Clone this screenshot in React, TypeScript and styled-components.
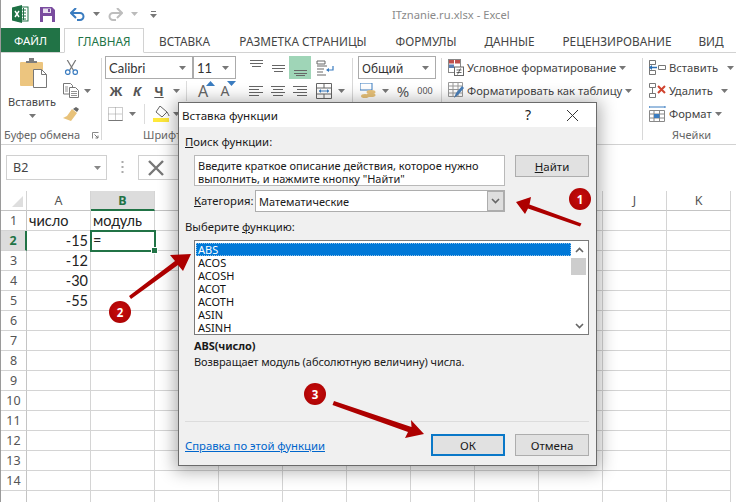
import React from "react";
import styled, { createGlobalStyle } from "styled-components";

const Global = createGlobalStyle`
  html, body { margin: 0; padding: 0; background: #fff; }
  * { box-sizing: border-box; }
`;
const UI = `"Noto Sans", "Open Sans", sans-serif`;
const Page = styled.div`
  position: relative; width: 736px; height: 502px; overflow: hidden; background: #fff;
  font-family: ${UI}; font-size: 11px; color: #444; border-left: 1px solid #9a9a9a;
`;
const TitleBar = styled.div`display: flex; align-items: center; height: 28px; padding-left: 10px;`;
const Qat = styled.div<{ $w: number }>`display: flex; justify-content: center; align-items: center; width: ${p => p.$w}px; flex: none;`;
const DocTitle = styled.div`margin-left: 227px; font-size: 11.2px; color: #8a8a8a; white-space: nowrap;`;
const Tabs = styled.div`display: flex; align-items: stretch; height: 25px; border-bottom: 1px solid #d2d2d2; font-size: 11.8px; color: #444;`;
const FileTab = styled.div`width: 59px; flex: none; height: 24px; background: #217346; color: #fff; display: flex; align-items: center; justify-content: center; font-size: 11.5px; margin-right: 4px;`;
const Tab = styled.div<{ $active?: boolean; $w: number }>`
  width: ${p => p.$w}px; flex: none; display: flex; align-items: center; justify-content: center; white-space: nowrap; height: 25px;
  ${p => p.$active ? "border: 1px solid #d2d2d2; border-bottom: 1px solid #fff; color: #217346; background:#fff;" : ""}
`;
const Ribbon = styled.div`display: flex; height: 92px; border-bottom: 1px solid #d2d2d2;`;
const Group = styled.div<{ $w: number }>`width: ${p => p.$w}px; flex: none; display: flex; flex-direction: column; position: relative; padding-top: 3px;`;
const GroupBody = styled.div`flex: 1; display: flex; min-height: 0;`;
const GroupLabel = styled.div<{ $pl: number }>`height: 16px; padding-left: ${p => p.$pl}px; font-size: 11px; line-height: 16px; color: #666; white-space: nowrap; display: flex; align-items: center; gap: 12px; position: relative; top: -1px;`;
const GroupSep = styled.div`width: 1px; flex: none; background: #d8d8d8; margin: 5px 0 4px;`;
const PasteBtn = styled.div`width: 62px; flex: none; display: flex; flex-direction: column; align-items: center; padding-top: 2px; color: #444;`;
const PasteArt = styled.svg`margin-left: 4px; flex: none;`;
const PasteLabel = styled.div`margin-top: 6px; font-size: 11px; line-height: 16px;`;
const PasteCaret = styled.div`margin-top: 4px; line-height: 0;`;
const Col = styled.div<{ $w?: number; $ml?: number }>`display: flex; flex-direction: column; ${p => p.$w ? `width:${p.$w}px;` : ""} margin-left: ${p => p.$ml ?? 0}px; flex: none;`;
const RibbonRow = styled.div<{ $ml?: number }>`display: flex; align-items: center; height: 23px; flex: none; padding-left: ${p => p.$ml ?? 0}px;`;
const Cell = styled.div<{ $w: number; $on?: boolean }>`
  width: ${p => p.$w}px; height: 23px; flex: none; display: flex; align-items: center; justify-content: center;
  ${p => p.$on ? "background:#9fd5b7;" : ""}
`;
const Glyph = styled.span<{ $b?: boolean; $i?: boolean; $u?: boolean; $s?: number }>`
  font-weight: ${p => p.$b ? 700 : 400}; font-style: ${p => p.$i ? "italic" : "normal"};
  text-decoration: ${p => p.$u ? "underline" : "none"}; font-size: ${p => p.$s ?? 13}px; color: #555;
`;
const RowSep = styled.div<{ $ml: number; $mr: number }>`width: 1px; height: 20px; background: #dcdcdc; margin: 0 ${p => p.$mr}px 0 ${p => p.$ml}px; flex: none;`;
const Combo = styled.div<{ $w: number; $lato?: boolean }>`
  width: ${p => p.$w}px; height: 23px; flex: none; border: 1px solid #ababab; background: #fff; display: flex; align-items: center; justify-content: space-between;
  padding: 0 6px 0 3px; color: #333;
  ${p => p.$lato ? "font-family: Lato, sans-serif; font-size: 13px;" : "font-size: 11.8px;"}
`;
const StyleItem = styled.div<{ $w: number }>`
  width: ${p => p.$w}px; height: 23px; display: flex; align-items: center; gap: 3px; font-size: 11.25px; color: #444; white-space: nowrap; padding-left: 6px;
  svg { flex: none; }
`;
const FormulaBar = styled.div`display: flex; align-items: center; height: 25px; margin-top: 10px; padding-left: 5px;`;
const NameBox = styled.div`width: 101px; height: 25px; border: 1px solid #d0d0d0; display: flex; align-items: center; justify-content: space-between; padding: 0 5px 0 6px; font-size: 12.5px; color: #444;`;
const Dots = styled.div`width: 31px; display: flex; justify-content: center; line-height: 0;`;
const FxBtn = styled.div`width: 60px; height: 25px; border: 1px solid #d0d0d0; padding-left: 9px; display: flex; align-items: center;`;
const Sheet = styled.div`margin-top: 11px; font-family: Lato, "Liberation Sans", sans-serif; font-size: 14.5px; color: #222;`;
const SheetRow = styled.div<{ $h: number }>`display: flex; height: ${p => p.$h}px;`;
const Corner = styled.div`width: 26px; flex: none; border-right: 1px solid #d4d4d4; border-bottom: 1px solid #c4c4c4; display: flex; justify-content: flex-end; align-items: flex-end; padding: 0 3px 3px 0;`;
const ColHead = styled.div<{ $on?: boolean }>`
  width: 64px; flex: none; display: flex; align-items: center; justify-content: center; font-family: ${UI}; font-size: 12.5px; border-right: 1px solid #d4d4d4;
  ${p => p.$on ? "background:#dcdcdc;color:#217346;font-weight:700;border-bottom:2px solid #217346;" : "color:#555;border-bottom:1px solid #c4c4c4;"}
`;
const RowHead = styled.div<{ $on?: boolean }>`
  width: 26px; flex: none; display: flex; align-items: center; justify-content: center; font-family: ${UI}; font-size: 12.5px; border-bottom: 1px solid #d4d4d4;
  ${p => p.$on ? "background:#dcdcdc;color:#217346;font-weight:700;border-right:2px solid #217346;" : "color:#555;border-right:1px solid #c4c4c4;"}
`;
const Td = styled.div<{ $r?: boolean; $sel?: boolean }>`
  width: 64px; flex: none; border-right: 1px solid #d4d4d4; border-bottom: 1px solid #d4d4d4; display: flex; align-items: center; padding: 0 2px;
  justify-content: ${p => p.$r ? "flex-end" : "flex-start"}; position: relative; white-space: nowrap;
  ${p => p.$sel ? "outline: 2px solid #217346; outline-offset: -1px; z-index: 1;" : ""}
`;
const Handle = styled.span`position: absolute; right: -4px; bottom: -4px; width: 5px; height: 5px; background: #217346; border: 1px solid #fff; box-sizing: content-box;`;

const Dialog = styled.div`
  position: absolute; left: 177px; top: 102px; width: 419px; height: 364px; background: #f0f0f0; border: 1px solid #6b6b6b;
  box-shadow: 0 2px 16px 3px rgba(0,0,0,.32); color: #1a1a1a; font-size: 11.3px; display: flex; flex-direction: column;
`;
const DlgTitle = styled.div`height: 24px; flex: none; background: #fff; display: flex; align-items: center; justify-content: space-between; padding: 0 18px 0 3px; font-size: 11.6px;`;
const DlgTools = styled.div`display: flex; align-items: center; gap: 36px; line-height: 0;`;
const Help = styled.span`font-size: 14px; line-height: 16px; color: #222;`;
const DlgBody = styled.div`flex: 1; padding: 7px 7px 0 6px; display: flex; flex-direction: column;`;
const Label = styled.div<{ $mt?: number; $ml?: number; $w?: number }>`line-height: 16px; height: 16px; margin-top: ${p => p.$mt ?? 0}px; margin-left: ${p => p.$ml ?? 0}px; white-space: nowrap; ${p => p.$w ? `width:${p.$w}px;flex:none;` : ""}`;
const Row = styled.div<{ $mt: number; $ml?: number }>`display: flex; align-items: flex-start; margin-top: ${p => p.$mt}px; margin-left: ${p => p.$ml ?? 9}px;`;
const DescBox = styled.div`width: 311px; height: 31px; background: #fff; border: 1px solid #b9b9b9; padding: 3px 3px; line-height: 13px; font-size: 11px; margin-right: 10px; white-space: nowrap;`;
const Btn = styled.div<{ $def?: boolean }>`
  width: 74px; height: 22px; display: flex; align-items: center; justify-content: center; background: #e1e1e1; font-size: 11.5px;
  border: ${p => p.$def ? "2px solid #0a78c8" : "1px solid #adadad"};
`;
const CatRow = styled.div`display: flex; align-items: center; height: 22px; margin-top: 4px; margin-left: 9px;`;
const Select = styled.div`width: 250px; height: 22px; background: #fff; border: 1px solid #adadad; display: flex; align-items: center; justify-content: space-between; padding-left: 3px; font-size: 11px;`;
const SelectBtn = styled.div`width: 17px; height: 20px; background: #dedede; border: 1px solid #adadad; display: flex; align-items: center; justify-content: center;`;
const List = styled.div`width: 395px; height: 95px; margin-top: 5px; margin-left: 9px; background: #fff; border: 1px solid #7a7a7a; display: flex; padding: 1px 0 0 1px;`;
const Items = styled.div`flex: 1; min-width: 0; padding-top: 1px;`;
const Item = styled.div<{ $sel?: boolean }>`
  height: 13px; line-height: 13px; padding-left: 2px; font-size: 11px;
  ${p => p.$sel ? "background:#0078d7;color:#fff;outline:1px dotted #8fc0e8;outline-offset:-1px;" : "color:#111;"}
`;
const Scroll = styled.div`width: 17px; flex: none; display: flex; flex-direction: column; align-items: stretch; margin-top: -1px;`;
const ScrollBtn = styled.div`height: 17px; display: flex; align-items: center; justify-content: center; flex: none;`;
const Thumb = styled.div`height: 17px; background: #cdcdcd; margin-right: 2px;`;
const ScrollFill = styled.div`flex: 1;`;
const Sig = styled.div`margin-top: 3px; margin-left: 9px; height: 16px; line-height: 16px; font-weight: 700; font-size: 11px; letter-spacing: -.1px;`;
const Desc = styled.div`margin-left: 9px; height: 16px; line-height: 16px; font-size: 11px; letter-spacing: -.07px; white-space: nowrap;`;
const Rule = styled.div`height: 1px; background: #dcdcdc; margin-top: 51px; flex: none;`;
const Footer = styled.div`display: flex; align-items: center; justify-content: space-between; margin-top: 12px; height: 22px;`;
const Link = styled.a`color: #0066cc; text-decoration: underline; font-size: 11.3px;`;
const Btns = styled.div`display: flex; gap: 10px;`;
const Overlay = styled.svg`position: absolute; left: -1px; top: 0; width: 736px; height: 502px; pointer-events: none;`;
const Badge = styled.div<{ $x: number; $y: number }>`
  position: absolute; left: ${p => p.$x - 12}px; top: ${p => p.$y - 11}px; width: 22px; height: 22px; border-radius: 50%;
  background: radial-gradient(circle at 50% 45%, #c80d0d, #a50000); color: #fff; font-weight: 700; font-size: 11.5px; display: flex; align-items: center; justify-content: center;
`;

const Caret = ({ c = "#777" }: { c?: string }) => <svg width="7" height="4" viewBox="0 0 7 4"><path d="M0 0h7L3.5 4z" fill={c} /></svg>;
const Chevron = ({ up, c = "#666" }: { up?: boolean; c?: string }) => (
  <svg width="9" height="6" viewBox="0 0 9 6"><path d={up ? "M1 5l3.5-3.5L8 5" : "M1 1l3.5 3.5L8 1"} fill="none" stroke={c} strokeWidth="1.6" /></svg>
);
const Lines = ({ rows }: { rows: [number, number, number][] }) => (
  <svg width="18" height="18" viewBox="0 0 18 18">{rows.map(([y, a, b], i) => <path key={i} d={`M${a} ${y}.5H${b}`} stroke="#666" />)}</svg>
);
const ExcelLogo = () => (
  <svg width="17" height="18" viewBox="0 0 17 18">
    <rect x="6" y="2" width="10" height="14" fill="#fff" stroke="#217346" />
    <path d="M9 5h5M9 8h5M9 11h5M9 14h5M11.5 3v12" stroke="#217346" />
    <path d="M0 2.5L10 0v18L0 15.5z" fill="#1e7145" />
    <path d="M3 6l4 6M7 6l-4 6" stroke="#fff" strokeWidth="1.4" />
  </svg>
);
const SaveIcon = () => (
  <svg width="15" height="15" viewBox="0 0 15 15">
    <path d="M0 0h12l3 3v12H0z" fill="#7a4c9f" />
    <rect x="3" y="1.5" width="8" height="4.5" fill="#e8e0ef" />
    <rect x="3" y="9" width="9" height="6" fill="#fff" />
    <rect x="8" y="2" width="2" height="3" fill="#7a4c9f" />
  </svg>
);
const UndoIcon = ({ c, flip }: { c: string; flip?: boolean }) => (
  <svg width="15" height="13" viewBox="0 0 15 13" style={flip ? { transform: "scaleX(-1)" } : undefined}>
    <path d="M2 5h8a3.5 3.5 0 0 1 0 7H7" fill="none" stroke={c} strokeWidth="2" />
    <path d="M6 0L1 5l5 5" fill="none" stroke={c} strokeWidth="2" />
  </svg>
);
const QatMore = () => <svg width="7" height="7" viewBox="0 0 7 7"><path d="M1 .5h5" stroke="#777" /><path d="M0 3h7L3.5 7z" fill="#777" /></svg>;
const PasteIcon = () => (
  <PasteArt width="30" height="30" viewBox="0 0 30 30">
    <rect x="1" y="4" width="23" height="24" rx="1" fill="#ecc57f" />
    <path d="M7 5V3h3V0h5v3h3v2z" fill="#7d7d7d" />
    <path d="M14.5 11.5h8l5 5v13h-13z" fill="#fff" stroke="#777" />
    <path d="M22.5 11.5v5h5" fill="none" stroke="#777" />
  </PasteArt>
);
const Scissors = () => (
  <svg width="15" height="15" viewBox="0 0 15 16">
    <path d="M3 0l6.5 11M12 0L5.5 11" stroke="#777" strokeWidth="1.3" />
    <circle cx="3.5" cy="13" r="2.4" fill="none" stroke="#3a7cc0" strokeWidth="1.3" />
    <circle cx="11.5" cy="13" r="2.4" fill="none" stroke="#3a7cc0" strokeWidth="1.3" />
  </svg>
);
const CopyIcon = () => (
  <svg width="16" height="15" viewBox="0 0 16 15" fill="#fff" stroke="#777">
    <path d="M.5 .5h7l2 2V11H.5z" /><path d="M6.5 4.5h6l3 3v7h-9z" />
    <path d="M8 8.5h6M8 10.5h6M8 12.5h6M2 4h3M2 6h3M2 8h3" strokeWidth=".8" />
  </svg>
);
const BrushIcon = () => (
  <svg width="16" height="14" viewBox="0 0 16 14">
    <path d="M10 2l3-2 3 2-2 3z" fill="#666" />
    <path d="M9 2l5 4-6 8-8-3 4-2z" fill="#e8c27a" />
  </svg>
);
const BigA = ({ up }: { up?: boolean }) => (
  <svg width="9" height="5" viewBox="0 0 9 5"><path d={up ? "M0 5l4.5-5L9 5z" : "M0 0l4.5 5L9 0z"} fill="#3a7cc0" /></svg>
);
const GrowA = styled.span<{ $s: number }>`position: relative; font-size: ${p => p.$s}px; color: #666; line-height: 1;`;
const Sup = styled.span`position: absolute; top: -3px; right: -7px; line-height: 0;`;
const BordersIcon = () => (
  <svg width="15" height="14" viewBox="0 0 15 14"><path d="M.5.5h14v13H.5zM7.5.5v13M.5 7h14" fill="none" stroke="#999" strokeDasharray="1 1" /><path d="M.5 13.5h14" stroke="#777" /></svg>
);
const FillIcon = () => (
  <svg width="17" height="16" viewBox="0 0 17 16">
    <path d="M7 0l7 6-5 5-6-5z" fill="#fff" stroke="#666" /><path d="M14 6c1 2 2 3 2 4" stroke="#666" />
    <rect x="0" y="12" width="16" height="4" fill="#ffe93b" />
  </svg>
);
const WrapIcon = () => (
  <svg width="18" height="16" viewBox="0 0 18 16">
    <path d="M1 1h8v3H1zM1 6h10M1 9h7M1 12h6M1 15h9" fill="none" stroke="#666" />
    <path d="M17 6v4h-6" fill="none" stroke="#3a7cc0" strokeWidth="1.2" /><path d="M13 8l-3 2 3 2z" fill="#3a7cc0" />
  </svg>
);
const MergeIcon = () => (
  <svg width="18" height="16" viewBox="0 0 18 16">
    <path d="M.5.5h15v15H.5zM.5 5h15M.5 11h15M8 .5V5M8 11v4.5" fill="none" stroke="#666" />
    <path d="M3 8h10" stroke="#3a7cc0" /><path d="M3 8l2-2v4zM13 8l-2-2v4z" fill="#3a7cc0" />
  </svg>
);
const CurrencyIcon = () => (
  <svg width="16" height="16" viewBox="0 0 16 16">
    <rect x="0" y="0" width="12" height="7" fill="#fff" stroke="#3a7cc0" /><ellipse cx="11" cy="9" rx="4.5" ry="2" fill="#e8c27a" /><ellipse cx="11" cy="12" rx="4.5" ry="2" fill="#e8c27a" /><ellipse cx="5" cy="13" rx="4" ry="2" fill="#e8c27a" />
  </svg>
);
const CondIcon = () => (
  <svg width="16" height="17" viewBox="0 0 16 17">
    <rect x=".5" y=".5" width="12" height="13" fill="#fff" stroke="#888" /><rect x="1" y="1" width="5" height="3.5" fill="#c0504d" /><rect x="7" y="1" width="5" height="3.5" fill="#c0504d" /><rect x="1" y="5.5" width="5" height="3.5" fill="#5b7fb5" />
    <rect x="6.5" y="8" width="9" height="8.5" fill="#fff" stroke="#666" /><path d="M8.5 11h5M8.5 13.5h5M12.5 9.5l-3 6" stroke="#444" strokeWidth=".8" />
  </svg>
);
const TableIcon = () => (
  <svg width="16" height="17" viewBox="0 0 16 17">
    <path d="M.5.5h14v14H.5zM.5 4h14M.5 7.5h14M.5 11h14M5 .5v14M10 .5v14" fill="none" stroke="#999" />
    <path d="M6 16l2-5 6-7 2 2-6 7z" fill="#4a7fb8" />
  </svg>
);
const InsIcon = () => (
  <svg width="17" height="15" viewBox="0 0 17 15" fill="none" stroke="#777">
    <path d="M.5.5h6v4h-6zM.5 10.5h6v4h-6zM.5.5v14M9.5 5.5h7v4h-7z" />
    <path d="M1 7.5h7" stroke="#2a6fb5" strokeWidth="1.5" /><path d="M3 5L0 7.5 3 10z" fill="#2a6fb5" stroke="none" />
  </svg>
);
const DelIcon = () => (
  <svg width="17" height="15" viewBox="0 0 17 15" fill="none" stroke="#777">
    <path d="M.5.5h6v4h-6zM.5 10.5h6v4h-6zM3.5 4.5v6" />
    <path d="M9 3l7 7M16 3l-7 7" stroke="#d0432f" strokeWidth="2" />
  </svg>
);
const FmtIcon = () => (
  <svg width="17" height="16" viewBox="0 0 17 16">
    <path d="M0 1h16M0 0v2M16 0v2" stroke="#3a7cc0" />
    <path d="M.5 4.5h15v11H.5zM.5 8h15M.5 12h15M5 4.5v11M10.5 4.5v11" fill="none" stroke="#888" />
    <rect x="5" y="8" width="5.5" height="4" fill="#3a7cc0" />
  </svg>
);
const Launcher = () => <svg width="7" height="7" viewBox="0 0 7 7"><path d="M.5 .5h6M.5 .5v6" fill="none" stroke="#888" /><path d="M2.5 2.5L6 6M6 3.5V6H3.5" fill="none" stroke="#777" /></svg>;
const CloseX = ({ s }: { s: number }) => <svg width={s} height={s} viewBox="0 0 10 10"><path d="M0 0l10 10M10 0L0 10" stroke="#333" strokeWidth=".9" fill="none" /></svg>;
const DotsIcon = () => <svg width="3" height="13" viewBox="0 0 3 13"><path d="M1.5 0v2M1.5 5v2M1.5 10v2" stroke="#aaa" strokeWidth="2" /></svg>;
const CancelBig = () => <svg width="16" height="16" viewBox="0 0 16 16"><path d="M1 1l14 14M15 1L1 15" stroke="#777" strokeWidth="2.4" /></svg>;
const Triangle = () => <svg width="11" height="11" viewBox="0 0 11 11"><path d="M11 0v11H0z" fill="#dedede" /></svg>;

const L = {
  top: [[1, 3, 16], [4, 3, 16], [7, 5, 14]] as [number, number, number][],
  mid: [[6, 3, 16], [9, 3, 16], [12, 5, 14]] as [number, number, number][],
  bot: [[11, 3, 16], [14, 3, 16], [16, 5, 14]] as [number, number, number][],
  l: [[4, 2, 16], [7, 2, 12], [10, 2, 16], [13, 2, 12]] as [number, number, number][],
  c: [[4, 2, 16], [7, 4, 14], [10, 2, 16], [13, 4, 14]] as [number, number, number][],
  r: [[4, 2, 16], [7, 6, 16], [10, 2, 16], [13, 6, 16]] as [number, number, number][],
};

const rowsData: Record<number, [string, string]> = { 1: ["число", "модуль"], 2: ["-15", "="], 3: ["-12", ""], 4: ["-30", ""], 5: ["-55", ""] };
const cols = ["A", "B", "C", "D", "E", "F", "G", "H", "I", "J", "K"];
const funcs = ["ABS", "ACOS", "ACOSH", "ACOT", "ACOTH", "ASIN", "ASINH"];
const tabs: [string, number][] = [["ВСТАВКА", 81], ["РАЗМЕТКА СТРАНИЦЫ", 156], ["ФОРМУЛЫ", 90], ["ДАННЫЕ", 77], ["РЕЦЕНЗИРОВАНИЕ", 138], ["ВИД", 50]];

export default function App() {
  return (
    <Page>
      <Global />
      <TitleBar>
        <Qat $w={18}><ExcelLogo /></Qat>
        <Qat $w={36}><SaveIcon /></Qat>
        <Qat $w={24}><UndoIcon c="#3a7cc0" /></Qat>
        <Qat $w={14}><Caret /></Qat>
        <Qat $w={24}><UndoIcon c="#bdbdbd" flip /></Qat>
        <Qat $w={14}><Caret c="#bbb" /></Qat>
        <Qat $w={24}><QatMore /></Qat>
        <DocTitle>ITznanie.ru.xlsx - Excel</DocTitle>
      </TitleBar>
      <Tabs>
        <FileTab>ФАЙЛ</FileTab>
        <Tab $active $w={80}>ГЛАВНАЯ</Tab>
        {tabs.map(([t, w]) => <Tab key={t} $w={w}>{t}</Tab>)}
      </Tabs>
      <Ribbon>
        <Group $w={100}>
          <GroupBody>
            <PasteBtn>
              <PasteIcon />
              <PasteLabel>Вставить</PasteLabel>
              <PasteCaret><Caret /></PasteCaret>
            </PasteBtn>
            <Col>
              <RibbonRow><Cell $w={16}><Scissors /></Cell></RibbonRow>
              <RibbonRow><Cell $w={16}><CopyIcon /></Cell><Cell $w={16}><Caret /></Cell></RibbonRow>
              <RibbonRow><Cell $w={16}><BrushIcon /></Cell></RibbonRow>
            </Col>
          </GroupBody>
          <GroupLabel $pl={3}>Буфер обмена<Launcher /></GroupLabel>
        </Group>
        <GroupSep />
        <Group $w={250}>
          <GroupBody>
            <Col $w={138}>
              <RibbonRow $ml={3}>
                <Combo $w={88} $lato>Calibri<Caret /></Combo>
                <Combo $w={43} $lato>11<Caret /></Combo>
              </RibbonRow>
              <RibbonRow $ml={3}>
                <Cell $w={22}><Glyph $b>Ж</Glyph></Cell>
                <Cell $w={20}><Glyph $b $i>К</Glyph></Cell>
                <Cell $w={24}><Glyph $b $u>Ч</Glyph></Cell>
                <Cell $w={10}><Caret /></Cell>
                <RowSep $ml={5} $mr={5} />
                <Cell $w={22}><GrowA $s={16}>A<Sup><BigA up /></Sup></GrowA></Cell>
                <Cell $w={22}><GrowA $s={14}>A<Sup><BigA /></Sup></GrowA></Cell>
              </RibbonRow>
              <RibbonRow $ml={3}>
                <Cell $w={20}><BordersIcon /></Cell>
                <Cell $w={14}><Caret /></Cell>
                <RowSep $ml={5} $mr={6} />
                <Cell $w={20}><FillIcon /></Cell>
                <Cell $w={10}><Caret /></Cell>
              </RibbonRow>
            </Col>
            <Col $w={112}>
              <RibbonRow $ml={5}>
                <Cell $w={22}><Lines rows={L.top} /></Cell>
                <Cell $w={22}><Lines rows={L.mid} /></Cell>
                <Cell $w={22} $on><Lines rows={L.bot} /></Cell>
                <Cell $w={3} />
                <Cell $w={22}><WrapIcon /></Cell>
              </RibbonRow>
              <RibbonRow $ml={5}>
                <Cell $w={22}><Lines rows={L.l} /></Cell>
                <Cell $w={22}><Lines rows={L.c} /></Cell>
                <Cell $w={22}><Lines rows={L.r} /></Cell>
                <Cell $w={3} />
                <Cell $w={22}><MergeIcon /></Cell>
                <Cell $w={10}><Caret /></Cell>
              </RibbonRow>
            </Col>
          </GroupBody>
          <GroupLabel $pl={41}>Шрифт</GroupLabel>
        </Group>
        <GroupSep />
        <Group $w={88}>
          <GroupBody>
            <Col $ml={5}>
              <RibbonRow><Combo $w={78}>Общий<Caret /></Combo></RibbonRow>
              <RibbonRow>
                <Cell $w={20}><CurrencyIcon /></Cell>
                <Cell $w={14}><Caret /></Cell>
                <Cell $w={22}><Glyph $s={15}>%</Glyph></Cell>
                <Cell $w={22}><Glyph $s={9}>000</Glyph></Cell>
              </RibbonRow>
            </Col>
          </GroupBody>
        </Group>
        <GroupSep />
        <Group $w={200}>
          <GroupBody>
            <Col>
              <StyleItem $w={200}><CondIcon />Условное форматирование<Caret /></StyleItem>
              <StyleItem $w={200}><TableIcon />Форматировать как таблицу<Caret /></StyleItem>
            </Col>
          </GroupBody>
        </Group>
        <GroupSep />
        <Group $w={92}>
          <GroupBody>
            <Col>
              <StyleItem $w={92}><InsIcon />Вставить<Cell $w={18}><Caret /></Cell></StyleItem>
              <StyleItem $w={92}><DelIcon />Удалить<Cell $w={18}><Caret /></Cell></StyleItem>
              <StyleItem $w={92}><FmtIcon />Формат<Caret /></StyleItem>
            </Col>
          </GroupBody>
          <GroupLabel $pl={29}>Ячейки</GroupLabel>
        </Group>
      </Ribbon>
      <FormulaBar>
        <NameBox>B2<Caret c="#888" /></NameBox>
        <Dots><DotsIcon /></Dots>
        <FxBtn><CancelBig /></FxBtn>
      </FormulaBar>
      <Sheet>
        <SheetRow $h={20}>
          <Corner><Triangle /></Corner>
          {cols.map(c => <ColHead key={c} $on={c === "B"}>{c}</ColHead>)}
        </SheetRow>
        {Array.from({ length: 15 }, (_, i) => i + 1).map(n => (
          <SheetRow key={n} $h={20}>
            <RowHead $on={n === 2}>{n < 15 ? n : ""}</RowHead>
            {cols.map((c, j) => {
              const v = rowsData[n];
              const text = v && j < 2 ? v[j] : "";
              return (
                <Td key={c} $r={j === 0 && n > 1} $sel={n === 2 && j === 1}>
                  {text}
                  {n === 2 && j === 1 && <Handle />}
                </Td>
              );
            })}
          </SheetRow>
        ))}
      </Sheet>

      <Dialog>
        <DlgTitle>
          Вставка функции
          <DlgTools><Help>?</Help><CloseX s={11} /></DlgTools>
        </DlgTitle>
        <DlgBody>
          <Label><u>П</u>оиск функции:</Label>
          <Row $mt={5}>
            <DescBox>Введите краткое описание действия, которое нужно<br />выполнить, и нажмите кнопку "Найти"</DescBox>
            <Btn><span><u>Н</u>айти</span></Btn>
          </Row>
          <CatRow>
            <Label $w={61}><u>К</u>атегория:</Label>
            <Select>Математические<SelectBtn><Chevron /></SelectBtn></Select>
          </CatRow>
          <Label $mt={7}>Выберите <u>ф</u>ункцию:</Label>
          <List>
            <Items>{funcs.map((f, i) => <Item key={f} $sel={i === 0}>{f}</Item>)}</Items>
            <Scroll>
              <ScrollBtn><Chevron up /></ScrollBtn>
              <Thumb />
              <ScrollFill />
              <ScrollBtn><Chevron /></ScrollBtn>
            </Scroll>
          </List>
          <Sig>ABS(число)</Sig>
          <Desc>Возвращает модуль (абсолютную величину) числа.</Desc>
          <Rule />
          <Footer>
            <Link>Справка по этой функции</Link>
            <Btns><Btn $def>ОК</Btn><Btn>Отмена</Btn></Btns>
          </Footer>
        </DlgBody>
      </Dialog>

      <Overlay viewBox="0 0 736 502">
        <path d="M516 202L531 197 529.5 204.5 581.5 223.5 580 226.5 528 208.5 525 214z" fill="#ad0000" />
        <path d="M191 254L170 255 175 261 129 296 131 299 178 265 183 271z" fill="#ad0000" />
        <path d="M424 434L411 420 411.5 427 334 401 332.5 405 408 432 405 438z" fill="#ad0000" />
      </Overlay>
      <Badge $x={580} $y={199}>1</Badge>
      <Badge $x={120} $y={312}>2</Badge>
      <Badge $x={315} $y={394}>3</Badge>
    </Page>
  );
}
